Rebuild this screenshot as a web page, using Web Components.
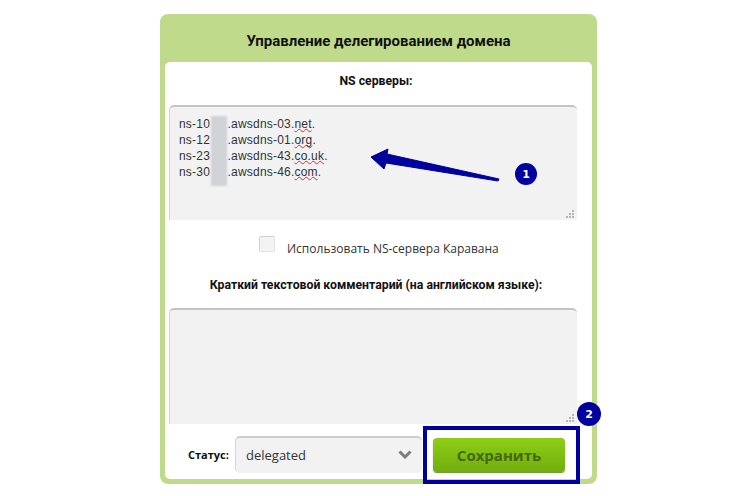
<!DOCTYPE html>
<html>
<head>
<meta charset="utf-8">
<title>Домен</title>
<style>
html, body { margin: 0; background: #fff; }
body { height: 496px; overflow: hidden; position: relative; font-family: "Open Sans", "Noto Sans", sans-serif; }
domain-panel { margin: 14px 0 0 160px; }
</style>
</head>
<body>
<domain-panel heading="Управление делегированием домена">
  <field-label style="height:43px">NS серверы:</field-label>
  <text-box>
    <ns-line pre="ns-10" tld="net" dom="awsdns-03"></ns-line>
    <ns-line pre="ns-12" tld="org" dom="awsdns-01"></ns-line>
    <ns-line pre="ns-23" tld="co.uk" dom="awsdns-43"></ns-line>
    <ns-line pre="ns-30" tld="com" dom="awsdns-46"></ns-line>
  </text-box>
  <check-row>Использовать NS-сервера Каравана</check-row>
  <field-label style="height:44px;padding-top:12px">Краткий текстовой комментарий (на английском языке):</field-label>
  <text-box style="height:116px"></text-box>
  <status-row>
    <status-select value="delegated"></status-select>
    <save-button>Сохранить</save-button>
  </status-row>
</domain-panel>
<note-overlay></note-overlay>

<script>
class DomainPanel extends HTMLElement {
  constructor() {
    super();
    this.attachShadow({ mode: 'open' });
    this.shadowRoot.innerHTML = `
      <style>
        :host { display: block; width: 437px; height: 470px; box-sizing: border-box; padding: 0 5px 5px; background: #c0da8c; border-radius: 8px; }
        h1 { margin: 0; height: 48px; font: 700 15px/54px Roboto, sans-serif; text-align: center; color: #111; }
        .body { height: 417px; box-sizing: border-box; padding: 0 15px 0 4px; background: #fff; border-radius: 5px; }
      </style>
      <h1>${this.getAttribute('heading')}</h1>
      <div class="body"><slot></slot></div>`;
  }
}

class FieldLabel extends HTMLElement {
  constructor() {
    super();
    this.attachShadow({ mode: 'open' });
    this.shadowRoot.innerHTML = `
      <style>
        :host { display: block; padding: 10px 0 0 6px; box-sizing: border-box; font: 700 12.25px/18px Roboto, sans-serif; text-align: center; color: #111; white-space: nowrap; }
      </style>
      <slot></slot>`;
  }
}

class TextBox extends HTMLElement {
  constructor() {
    super();
    this.attachShadow({ mode: 'open' });
    this.shadowRoot.innerHTML = `
      <style>
        :host { display: block; position: relative; height: 115px; box-sizing: border-box; padding: 9px 9px; background: #f2f2f3; border-radius: 5px 5px 0 0; border-top: 2px solid #c4c4c4; border-left: 1px solid #d6d6d6; }
        svg { position: absolute; right: 3px; bottom: 2px; }
      </style>
      <slot></slot>
      <svg width="8" height="8" viewBox="0 0 8 8" fill="#b5b5b5">
        <rect x="6" y="0" width="2" height="2"/><rect x="3" y="3" width="2" height="2"/><rect x="6" y="3" width="2" height="2"/>
        <rect x="0" y="6" width="2" height="2"/><rect x="3" y="6" width="2" height="2"/><rect x="6" y="6" width="2" height="2"/>
      </svg>`;
  }
}

class NsLine extends HTMLElement {
  constructor() {
    super();
    this.attachShadow({ mode: 'open' });
    this.shadowRoot.innerHTML = `
      <style>
        :host { display: block; font: 12px/16px "Liberation Sans", Arial, sans-serif; letter-spacing: 0.2px; color: #333; white-space: nowrap; }
        .gap { display: inline-block; width: 17.5px; }
        u { text-decoration: underline wavy #d9302c 1px; text-underline-offset: 0; text-decoration-skip-ink: none; }
      </style>
      ${this.getAttribute('pre')}<span class="gap"></span>.${this.getAttribute('dom')}.<u>${this.getAttribute('tld')}</u>.`;
  }
}

class CheckRow extends HTMLElement {
  constructor() {
    super();
    this.attachShadow({ mode: 'open' });
    this.shadowRoot.innerHTML = `
      <style>
        :host { display: flex; align-items: center; height: 44px; padding-left: 90px; box-sizing: border-box; padding-top: 12px; font-size: 12px; color: #333; white-space: nowrap; }
        i { flex: none; width: 16px; height: 16px; box-sizing: border-box; margin-right: 12px; margin-top: -8px; background: #f3f3f3; border: 1px solid #e2e2e2; border-top-color: #cfcfcf; border-left-color: #d4d4d4; border-radius: 2px; }
      </style>
      <i></i><slot></slot>`;
  }
}

class StatusRow extends HTMLElement {
  constructor() {
    super();
    this.attachShadow({ mode: 'open' });
    this.shadowRoot.innerHTML = `
      <style>
        :host { display: flex; align-items: center; height: 37px; margin-top: 12px; }
        b { width: 47px; margin-left: 19px; font-size: 11px; color: #111; white-space: nowrap; }
        .wrap { display: flex; align-items: center; gap: 11px; }
      </style>
      <b>Статус:</b><div class="wrap"><slot></slot></div>`;
  }
}

class StatusSelect extends HTMLElement {
  constructor() {
    super();
    this.attachShadow({ mode: 'open' });
    this.shadowRoot.innerHTML = `
      <style>
        :host { display: flex; align-items: center; justify-content: space-between; width: 187px; height: 37px; box-sizing: border-box; padding: 0 10px 2px 10px; background: #f2f2f3; border-radius: 5px; border-top: 2px solid #cdcdcd; border-left: 1px solid #d6d6d6; font-size: 13px; color: #333; }
      </style>
      <span>${this.getAttribute('value')}</span>
      <svg width="14" height="9" viewBox="0 0 14 9"><path d="M1.5 1.5 7 7l5.5-5.5" fill="none" stroke="#7d7d7d" stroke-width="3"/></svg>`;
  }
}

class SaveButton extends HTMLElement {
  constructor() {
    super();
    this.attachShadow({ mode: 'open' });
    this.shadowRoot.innerHTML = `
      <style>
        :host { display: block; width: 132px; height: 34px; line-height: 35px; text-align: center; border-radius: 4px; background: linear-gradient(#8fce14, #70ad10); box-shadow: 0 1px 1px #6a8f2a; font-size: 15px; font-weight: 700; color: #44690a; white-space: nowrap; }
      </style>
      <slot></slot>`;
  }
}

class NoteOverlay extends HTMLElement {
  constructor() {
    super();
    this.attachShadow({ mode: 'open' });
    this.shadowRoot.innerHTML = `
      <style>
        :host { display: block; position: absolute; inset: 0; pointer-events: none; font-family: "DejaVu Sans", sans-serif; }
        .blur { position: absolute; left: 211px; top: 116px; width: 16px; height: 70px; background: #cfd3d6; filter: blur(1px); }
        .badge { position: absolute; display: flex; align-items: center; justify-content: center; border-radius: 50%; background: #01009e; color: #fff; font-size: 11px; font-weight: 700; }
        .one { left: 515px; top: 163px; width: 22px; height: 22px; }
        .two { left: 577px; top: 402px; width: 24px; height: 24px; }
        .frame { position: absolute; left: 423px; top: 426px; width: 157px; height: 58px; box-sizing: border-box; border: 4px solid #01009e; }
        svg { position: absolute; left: 0; top: 0; }
      </style>
      <div class="blur"></div>
      <svg width="740" height="496"><path d="M371 157 388 149 387 154 499 179 498 181 386 163 384 169Z" fill="#01009e" stroke="#01009e" stroke-width="1" stroke-linejoin="round"/></svg>
      <div class="badge one">1</div>
      <div class="frame"></div>
      <div class="badge two">2</div>`;
  }
}

customElements.define('domain-panel', DomainPanel);
customElements.define('field-label', FieldLabel);
customElements.define('text-box', TextBox);
customElements.define('ns-line', NsLine);
customElements.define('check-row', CheckRow);
customElements.define('status-row', StatusRow);
customElements.define('status-select', StatusSelect);
customElements.define('save-button', SaveButton);
customElements.define('note-overlay', NoteOverlay);
</script>
</body>
</html>
